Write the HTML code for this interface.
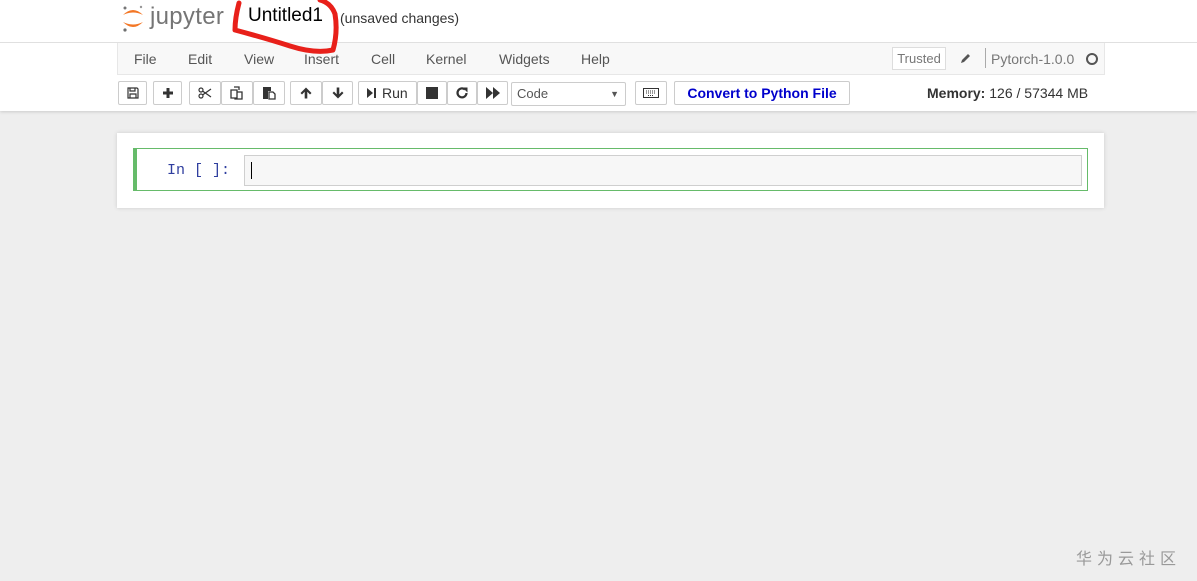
<!DOCTYPE html>
<html><head><meta charset="utf-8"><style>
body{margin:0;width:1197px;height:581px;background:#eeeeee;font-family:"Liberation Sans",sans-serif;position:relative;overflow:hidden}
.a{position:absolute}
#hdr{left:0;top:0;width:1197px;height:111px;background:#fff;box-shadow:0 1px 3px rgba(0,0,0,.15)}
.btn{position:absolute;top:81px;height:24px;border:1px solid #ccc;background:#fff;border-radius:2px;box-sizing:border-box;font-size:14px;color:#333;text-align:center;line-height:22px}
.btn svg{position:absolute;left:50%;top:50%;transform:translate(-50%,-50%)}
.menu{position:absolute;top:51px;font-size:14px;color:#555}
</style></head><body>
<div id="hdr" class="a"></div>
<div class="a" style="left:0;top:42px;width:1197px;height:1px;background:#e0e0e0"></div>
<!-- logo -->
<svg class="a" style="left:120px;top:3px" width="26" height="30" viewBox="0 0 26 30">
<path d="M3 12 Q13 2 23 12 Q13 7 3 12Z" fill="#f37726"/>
<path d="M3 19 Q13 29 23 19 Q13 24 3 19Z" fill="#f37726"/>
<circle cx="5" cy="5" r="1.5" fill="#767677"/><circle cx="21" cy="4" r="1.2" fill="#989798"/><circle cx="5" cy="27" r="1.6" fill="#6f7070"/>
</svg>
<div class="a" style="left:150px;top:3px;font-size:24px;color:#757575;letter-spacing:0.3px">jupyter</div>
<div class="a" style="left:248px;top:5px;font-size:19px;color:#000">Untitled1</div>
<div class="a" style="left:340px;top:10px;font-size:14px;color:#333">(unsaved changes)</div>
<!-- menubar -->
<div class="a" style="left:117px;top:43px;width:986px;height:31px;background:#f8f8f8;border:1px solid #e7e7e7;border-top:none"></div>
<div class="menu" style="left:134px">File</div><div class="menu" style="left:188px">Edit</div><div class="menu" style="left:244px">View</div><div class="menu" style="left:304px">Insert</div><div class="menu" style="left:371px">Cell</div><div class="menu" style="left:426px">Kernel</div><div class="menu" style="left:499px">Widgets</div><div class="menu" style="left:581px">Help</div>
<div class="a" style="left:892px;top:47px;width:54px;height:23px;border:1px solid #ddd;background:#fff;font-size:13px;color:#777;text-align:center;line-height:22px;box-sizing:border-box">Trusted</div>
<svg class="a" style="left:959px;top:52px" width="13" height="13" viewBox="0 0 13 13"><path d="M2 11 L3 8 L9 2 L11 4 L5 10 Z" fill="#555"/></svg>
<div class="a" style="left:985px;top:48px;width:1px;height:20px;background:#aaa"></div>
<div class="a" style="left:991px;top:51px;font-size:14px;color:#777">Pytorch-1.0.0</div>
<div class="a" style="left:1086px;top:53px;width:8px;height:8px;border:2px solid #555;border-radius:50%"></div>
<!-- toolbar -->
<div class="btn" style="left:118px;width:29px"><svg width="12" height="12" viewBox="0 0 12 12"><path d="M1 1H10L11 2V11H1Z M3 1V4H8V1 M3 7H9V11H3Z" fill="none" stroke="#333" stroke-width="1.2"/></svg></div>
<div class="btn" style="left:153px;width:29px"><svg width="12" height="12"><path d="M6 1V11M1 6H11" stroke="#333" stroke-width="3"/></svg></div>
<div class="btn" style="left:189px;width:32px"><svg width="14" height="12" viewBox="0 0 14 12"><circle cx="3" cy="3" r="2" fill="none" stroke="#333" stroke-width="1.2"/><circle cx="3" cy="9" r="2" fill="none" stroke="#333" stroke-width="1.2"/><path d="M4.5 4L13 10M4.5 8L13 2" stroke="#333" stroke-width="1.2"/></svg></div>
<div class="btn" style="left:221px;width:32px"><svg width="14" height="14" viewBox="0 0 14 14"><path d="M4 1H9V4 M1 4H7V12H1Z M7 6H12V13H5V12" fill="none" stroke="#333" stroke-width="1.3"/></svg></div>
<div class="btn" style="left:253px;width:32px"><svg width="14" height="14" viewBox="0 0 14 14"><path d="M1 1H9V5H6V13H1Z" fill="#333"/><path d="M7 6H11L13 8V13H7Z" fill="none" stroke="#333" stroke-width="1.3"/></svg></div>
<div class="btn" style="left:290px;width:32px"><svg width="13" height="13" viewBox="0 0 13 13"><path d="M6.5 1L12 6.5L10.5 8L7.8 5.3V12H5.2V5.3L2.5 8L1 6.5Z" fill="#333"/></svg></div>
<div class="btn" style="left:322px;width:31px"><svg width="13" height="13" viewBox="0 0 13 13"><path d="M6.5 12L12 6.5L10.5 5L7.8 7.7V1H5.2V7.7L2.5 5L1 6.5Z" fill="#333"/></svg></div>
<div class="btn" style="left:358px;width:59px;text-align:left"><svg style="left:13px" width="10" height="12" viewBox="0 0 10 12"><path d="M0 1L6 6L0 11Z M7 1H9V11H7Z" fill="#333"/></svg><span style="position:absolute;left:23px">Run</span></div>
<div class="btn" style="left:417px;width:30px"><svg width="12" height="12"><rect width="12" height="12" fill="#333"/></svg></div>
<div class="btn" style="left:447px;width:30px"><svg width="13" height="13" viewBox="0 0 13 13"><path d="M11 6.5A4.5 4.5 0 1 1 9.5 3" fill="none" stroke="#333" stroke-width="2.2"/><path d="M7 1H12V6Z" fill="#333"/></svg></div>
<div class="btn" style="left:477px;width:31px"><svg width="14" height="12" viewBox="0 0 14 12"><path d="M0 0L7 6L0 12Z M7 0L14 6L7 12Z" fill="#333"/></svg></div>
<div class="btn" style="left:511px;width:115px;text-align:left;padding-left:5px;font-size:13px;color:#555;top:82px">Code<span style="position:absolute;right:6px;font-size:9px">▼</span></div>
<div class="btn" style="left:635px;width:32px"><svg width="16" height="10" viewBox="0 0 16 10"><rect x="0.5" y="0.5" width="15" height="9" fill="none" stroke="#333"/><path d="M3 3H13M3 5H13M5 7.5H11" stroke="#333" stroke-dasharray="1 1"/></svg></div>
<div class="btn" style="left:674px;width:176px;color:#0000cc;font-weight:bold;font-size:14px">Convert to Python File</div>
<div class="a" style="left:927px;top:85px;font-size:14px;color:#333"><b>Memory:</b> 126 / 57344 MB</div>
<!-- notebook -->
<div class="a" style="left:117px;top:133px;width:987px;height:75px;background:#fff;box-shadow:0 0 4px rgba(0,0,0,.15)"></div>
<div class="a" style="left:133px;top:148px;width:955px;height:43px;border:1px solid #66bb6a;border-left:4px solid #66bb6a;box-sizing:border-box"></div>
<div class="a" style="left:167px;top:162px;font-family:'Liberation Mono',monospace;font-size:15px;color:#303f9f;white-space:pre">In [ ]:</div>
<div class="a" style="left:244px;top:155px;width:838px;height:31px;background:#f7f7f7;border:1px solid #cfcfcf;box-sizing:border-box"></div>
<div class="a" style="left:251px;top:162px;width:1px;height:17px;background:#000"></div>
<div class="a" style="left:1076px;top:545px;font-family:'Noto Sans CJK SC',sans-serif;font-size:16px;color:#999;letter-spacing:5px">华为云社区</div>
<svg class="a" style="left:225px;top:0;overflow:visible;z-index:10" width="125" height="60"><path d="M14 3 Q10 18 10 30 Q40 38 65 46 Q90 54 108 50 Q113 32 110 14 Q106 3 95 0" fill="none" stroke="#e8201a" stroke-width="5" stroke-linecap="round" stroke-linejoin="round"/></svg>
</body></html>
